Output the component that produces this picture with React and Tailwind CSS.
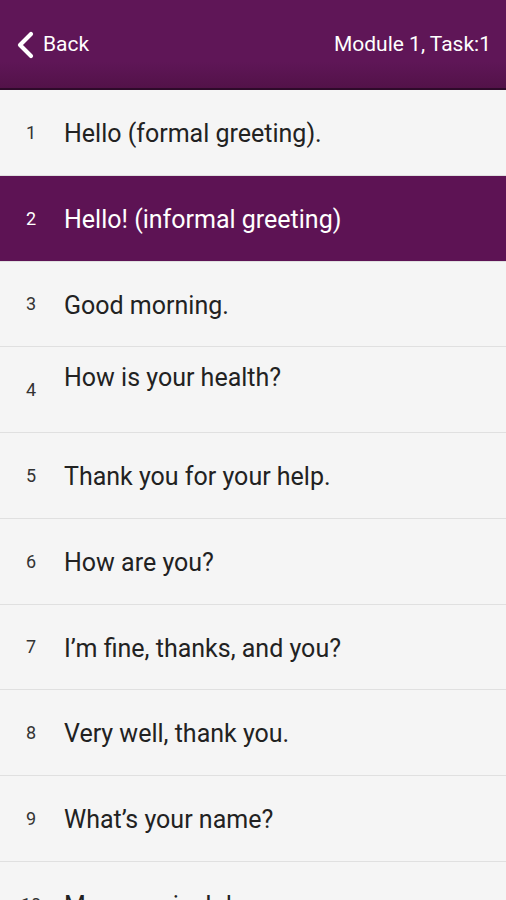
const items = [
  'Hello (formal greeting).',
  'Hello! (informal greeting)',
  'Good morning.',
  'How is your health?',
  'Thank you for your help.',
  'How are you?',
  'I’m fine, thanks, and you?',
  'Very well, thank you.',
  'What’s your name?',
  'My name is John.',
]

export default function App() {
  const selected = 2

  return (
    <div className="h-[900px] overflow-hidden bg-[#f5f5f5] font-['Roboto',sans-serif]">
      <header className="flex h-[90px] items-center justify-between border-b-2 border-[#2e0a2a] bg-gradient-to-b from-[#5f1657] from-70% to-[#531249] pl-[15px] pr-[15px] text-white">
        <div className="flex items-center gap-[8px]">
          <svg width="20" height="28" viewBox="0 0 20 28" className="mt-[1px]">
            <path d="M16 3 L5 14 L16 25" fill="none" stroke="white" strokeWidth="4.2" strokeLinecap="round" strokeLinejoin="round" />
          </svg>
          <span className="mt-[1px] text-[21px]">Back</span>
        </div>
        <span className="mt-[1px] text-[21px]">Module 1, Task:1</span>
      </header>

      <ul>
        {items.map((text, i) => {
          const n = i + 1
          const active = n === selected
          const raised = n === 4
          return (
            <li
              key={n}
              className={`flex h-[85.75px] border-b border-[#e0e0e0] ${active ? 'bg-[#5d1354] text-white' : 'text-[#222]'}`}
            >
              <span className={`flex w-[62px] shrink-0 items-center justify-center text-[18px] ${active ? 'text-white' : 'text-[#333]'}`}>
                {n}
              </span>
              <span className={`flex pl-[2px] text-[25px] ${raised ? 'items-start pt-[12px]' : 'items-center pt-[3px]'}`}>
                {text}
              </span>
            </li>
          )
        })}
      </ul>
    </div>
  )
}
